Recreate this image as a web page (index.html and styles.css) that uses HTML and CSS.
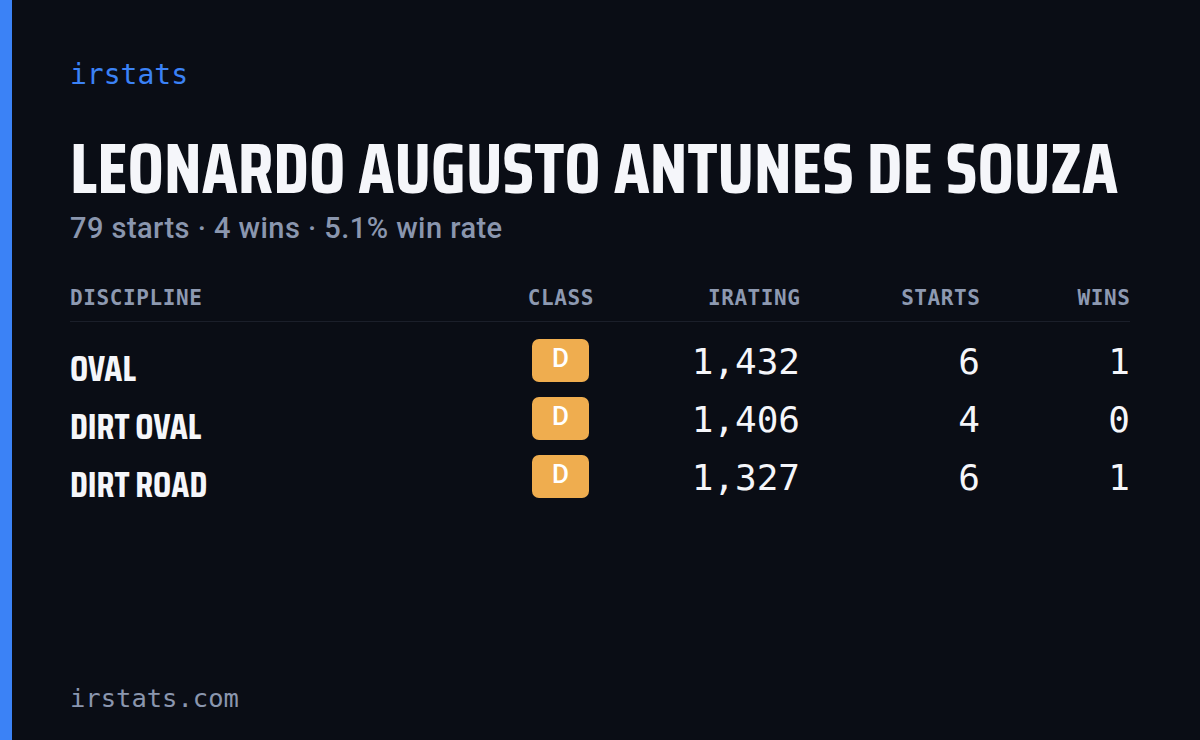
FILE: index.html
```html
<!DOCTYPE html>
<html>
<head>
<meta charset="utf-8">
<link rel="stylesheet" href="styles.css">
</head>
<body>
<div class="card">
  <div class="accent"></div>
  <main class="content">
    <div class="brand">irstats</div>
    <h1 class="name">LEONARDO AUGUSTO ANTUNES DE SOUZA</h1>
    <div class="summary">79 starts · 4 wins · 5.1% win rate</div>
    <div class="table">
      <div class="row head">
        <div class="c-disc">DISCIPLINE</div>
        <div class="c-class">CLASS</div>
        <div class="c-num">IRATING</div>
        <div class="c-num">STARTS</div>
        <div class="c-num">WINS</div>
      </div>
      <div class="row body">
        <div class="c-disc disc">OVAL</div>
        <div class="c-class"><span class="badge">D</span></div>
        <div class="c-num num">1,432</div>
        <div class="c-num num">6</div>
        <div class="c-num num">1</div>
      </div>
      <div class="row body">
        <div class="c-disc disc">DIRT OVAL</div>
        <div class="c-class"><span class="badge">D</span></div>
        <div class="c-num num">1,406</div>
        <div class="c-num num">4</div>
        <div class="c-num num">0</div>
      </div>
      <div class="row body">
        <div class="c-disc disc">DIRT ROAD</div>
        <div class="c-class"><span class="badge">D</span></div>
        <div class="c-num num">1,327</div>
        <div class="c-num num">6</div>
        <div class="c-num num">1</div>
      </div>
    </div>
    <div class="footer">irstats.com</div>
  </main>
</div>
</body>
</html>
```
FILE: styles.css
```css
html, body {
  margin: 0;
  padding: 0;
  background: #0a0d15;
}
.card {
  width: 1200px;
  height: 740px;
  display: flex;
  background: #0a0d15;
  overflow: hidden;
}
.accent {
  width: 12px;
  flex: none;
  background: #3b82f6;
}
.content {
  flex: 1;
  padding: 55px 70px 0 58px;
  display: flex;
  flex-direction: column;
}
.brand {
  font-family: "DejaVu Sans Mono", monospace;
  font-size: 28px;
  line-height: 40px;
  color: #3b82f6;
}
.name {
  margin: 37px 0 0;
  font-family: "Saira Condensed", "Roboto Condensed", "Liberation Sans Narrow", "DejaVu Sans Condensed", sans-serif;
  font-weight: 700;
  font-size: 72px;
  line-height: 72px;
  color: #f5f6fa;
  white-space: nowrap;
}
.summary {
  margin-top: 8px;
  font-family: Roboto, "Open Sans", sans-serif;
  font-weight: 500;
  font-size: 29px;
  letter-spacing: 0.45px;
  line-height: 32px;
  color: #8a96ae;
}
.table {
  margin-top: 35px;
  width: 1060px;
}
.row {
  display: grid;
  grid-template-columns: 425px 131px 174px 180px 150px;
  align-items: center;
}
.head {
  height: 35px;
  padding-top: 1px;
  padding-bottom: 6px;
  border-bottom: 1px solid #1b1f2a;
  font-family: "DejaVu Sans Mono", monospace;
  font-weight: 700;
  font-size: 21px;
  letter-spacing: 0.6px;
  color: #8d99b1;
}
.head + .body {
  margin-top: 1px;
}
.body {
  height: 58px;
}
.c-class {
  text-align: center;
}
.c-num {
  text-align: right;
}
.head .c-num, .head .c-class {
  margin-right: -0.6px;
}
.disc {
  font-family: "Saira Condensed", "Roboto Condensed", "Liberation Sans Narrow", "DejaVu Sans Condensed", sans-serif;
  font-weight: 700;
  font-size: 36px;
  color: #f5f6fa;
  padding-top: 17px;
}
.badge {
  display: inline-flex;
  align-items: center;
  justify-content: center;
  width: 57px;
  height: 43px;
  border-radius: 7px;
  background: #efad4f;
  color: #ffffff;
  font-family: Roboto, "Open Sans", sans-serif;
  font-weight: 500;
  font-size: 26px;
  line-height: 1;
  padding-bottom: 4px;
  box-sizing: border-box;
}
.num {
  font-family: "DejaVu Sans Mono", monospace;
  font-size: 36px;
  color: #f5f6fa;
  padding-top: 3px;
}
.footer {
  margin-top: auto;
  margin-bottom: 25px;
  font-family: "DejaVu Sans Mono", monospace;
  font-size: 25.5px;
  line-height: 34px;
  color: #8a96ae;
}
```
